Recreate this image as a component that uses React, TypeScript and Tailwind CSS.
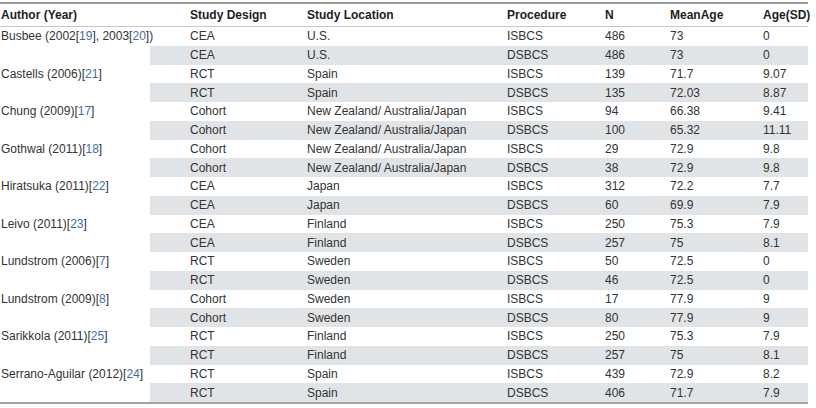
import React from "react";

type Ref = { text: string; link?: boolean };

type Row = {
  author?: Ref[];
  design: string;
  location: string;
  procedure: string;
  n: string;
  meanAge: string;
  sd: string;
};

const a = (text: string): Ref => ({ text });
const l = (text: string): Ref => ({ text, link: true });

const ROWS: Row[] = [
  { author: [a("Busbee (2002["), l("19"), a("], 2003["), l("20"), a("])")], design: "CEA", location: "U.S.", procedure: "ISBCS", n: "486", meanAge: "73", sd: "0" },
  { design: "CEA", location: "U.S.", procedure: "DSBCS", n: "486", meanAge: "73", sd: "0" },
  { author: [a("Castells (2006)["), l("21"), a("]")], design: "RCT", location: "Spain", procedure: "ISBCS", n: "139", meanAge: "71.7", sd: "9.07" },
  { design: "RCT", location: "Spain", procedure: "DSBCS", n: "135", meanAge: "72.03", sd: "8.87" },
  { author: [a("Chung (2009)["), l("17"), a("]")], design: "Cohort", location: "New Zealand/ Australia/Japan", procedure: "ISBCS", n: "94", meanAge: "66.38", sd: "9.41" },
  { design: "Cohort", location: "New Zealand/ Australia/Japan", procedure: "DSBCS", n: "100", meanAge: "65.32", sd: "11.11" },
  { author: [a("Gothwal (2011)["), l("18"), a("]")], design: "Cohort", location: "New Zealand/ Australia/Japan", procedure: "ISBCS", n: "29", meanAge: "72.9", sd: "9.8" },
  { design: "Cohort", location: "New Zealand/ Australia/Japan", procedure: "DSBCS", n: "38", meanAge: "72.9", sd: "9.8" },
  { author: [a("Hiratsuka (2011)["), l("22"), a("]")], design: "CEA", location: "Japan", procedure: "ISBCS", n: "312", meanAge: "72.2", sd: "7.7" },
  { design: "CEA", location: "Japan", procedure: "DSBCS", n: "60", meanAge: "69.9", sd: "7.9" },
  { author: [a("Leivo (2011)["), l("23"), a("]")], design: "CEA", location: "Finland", procedure: "ISBCS", n: "250", meanAge: "75.3", sd: "7.9" },
  { design: "CEA", location: "Finland", procedure: "DSBCS", n: "257", meanAge: "75", sd: "8.1" },
  { author: [a("Lundstrom (2006)["), l("7"), a("]")], design: "RCT", location: "Sweden", procedure: "ISBCS", n: "50", meanAge: "72.5", sd: "0" },
  { design: "RCT", location: "Sweden", procedure: "DSBCS", n: "46", meanAge: "72.5", sd: "0" },
  { author: [a("Lundstrom (2009)["), l("8"), a("]")], design: "Cohort", location: "Sweden", procedure: "ISBCS", n: "17", meanAge: "77.9", sd: "9" },
  { design: "Cohort", location: "Sweden", procedure: "DSBCS", n: "80", meanAge: "77.9", sd: "9" },
  { author: [a("Sarikkola (2011)["), l("25"), a("]")], design: "RCT", location: "Finland", procedure: "ISBCS", n: "250", meanAge: "75.3", sd: "7.9" },
  { design: "RCT", location: "Finland", procedure: "DSBCS", n: "257", meanAge: "75", sd: "8.1" },
  { author: [a("Serrano-Aguilar (2012)["), l("24"), a("]")], design: "RCT", location: "Spain", procedure: "ISBCS", n: "439", meanAge: "72.9", sd: "8.2" },
  { design: "RCT", location: "Spain", procedure: "DSBCS", n: "406", meanAge: "71.7", sd: "7.9" },
];

// column widths measured from where each column's text starts
const COL_AUTHOR = "w-[150px] shrink-0 pl-px";
const COL_DESIGN = "w-[157px] shrink-0 pl-[40px]";
const COL_LOCATION = "w-[200px] shrink-0";
const COL_PROC = "w-[98px] shrink-0";
const COL_N = "w-[65px] shrink-0";
const COL_MEAN = "w-[93px] shrink-0";
const COL_SD = "flex-1";

function Cells({ r }: { r: Row }) {
  return (
    <>
      <div className={COL_DESIGN}>{r.design}</div>
      <div className={COL_LOCATION}>{r.location}</div>
      <div className={COL_PROC}>{r.procedure}</div>
      <div className={COL_N}>{r.n}</div>
      <div className={COL_MEAN}>{r.meanAge}</div>
      <div className={COL_SD}>{r.sd}</div>
    </>
  );
}

export default function App() {
  return (
    <div className="h-[408px] w-[816px] bg-white pt-[2px] font-['Liberation_Sans',Arial,sans-serif] text-[12px] text-[#333]">
      <div className="w-[808px]">
        <div className="flex h-[25px] items-center border-t-2 border-b border-t-[#9a9a9a] border-b-[#c9c9c9] font-bold text-[#1e1e1e]">
          <div className={COL_AUTHOR}>Author (Year)</div>
          <div className={COL_DESIGN}>Study Design</div>
          <div className={COL_LOCATION}>Study Location</div>
          <div className={COL_PROC}>Procedure</div>
          <div className={COL_N}>N</div>
          <div className={COL_MEAN}>MeanAge</div>
          <div className={COL_SD}>Age(SD)</div>
        </div>
        <div className="border-b-2 border-b-[#a3a3a3]">
          {ROWS.map((r, i) => (
            <div key={i} className="flex h-[18.75px] items-center">
              <div className={`${COL_AUTHOR} flex h-full items-center whitespace-nowrap`}>
                {r.author?.map((p, j) =>
                  p.link ? (
                    <span key={j} className="text-[#3b6db3]">{p.text}</span>
                  ) : (
                    <span key={j}>{p.text}</span>
                  ),
                )}
              </div>
              <div className={`flex h-full flex-1 items-center whitespace-nowrap ${i % 2 === 1 ? "bg-[#e1e4e6]" : ""}`}>
                <Cells r={r} />
              </div>
            </div>
          ))}
        </div>
      </div>
    </div>
  );
}
